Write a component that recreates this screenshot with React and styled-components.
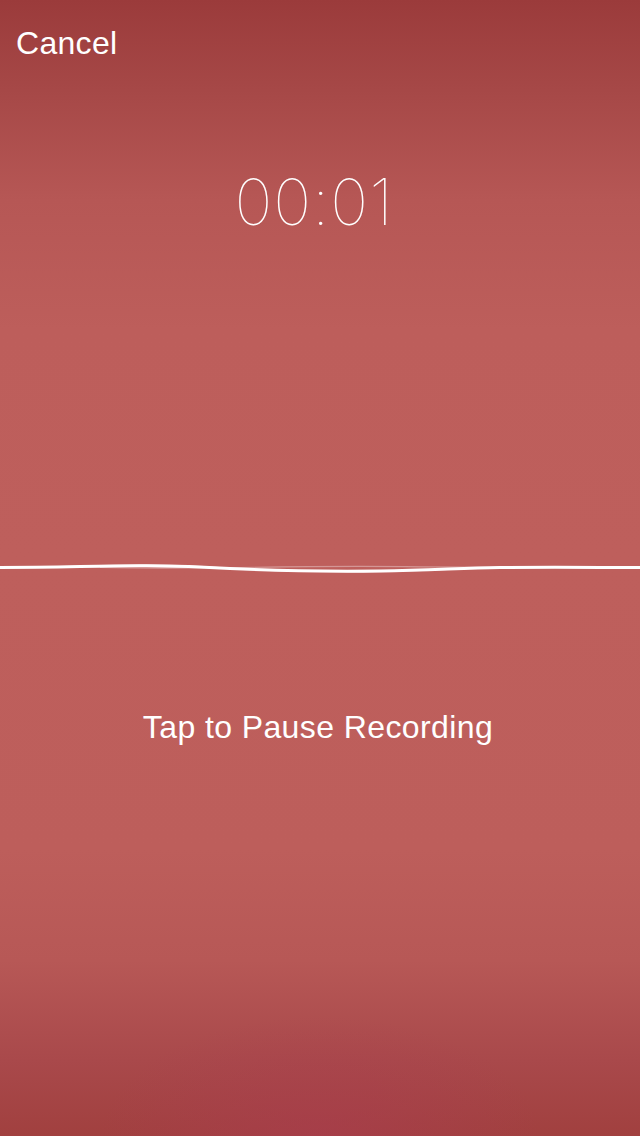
import React from "react";
import styled, { createGlobalStyle } from "styled-components";

const Global = createGlobalStyle`
  html, body { margin: 0; padding: 0; }
  body { width: 640px; height: 1136px; overflow: hidden; }
  #root { width: 640px; height: 1136px; }
`;

const Screen = styled.div`
  position: relative;
  width: 640px;
  height: 1136px;
  overflow: hidden;
  display: flex;
  flex-direction: column;
  font-family: "Liberation Sans", Arial, sans-serif;
  color: #fff;
  background:
    radial-gradient(ellipse 220px 120px at 320px 1136px, rgba(170, 60, 80, 0.55), rgba(170, 60, 80, 0) 100%),
    linear-gradient(
      to bottom,
      #9b3b3b 0px,
      #a64847 90px,
      #b65755 200px,
      #bd5e5b 330px,
      #be5f5c 560px,
      #bd5e5b 850px,
      #b75856 960px,
      #a9494b 1060px,
      #a1403f 1136px
    );
`;

const TopBar = styled.div`
  display: flex;
  padding: 27px 16px 0;
  height: 32px;
`;

const CancelButton = styled.button`
  background: none;
  border: none;
  padding: 0;
  margin: 0;
  color: #fff;
  font-family: "Liberation Sans", Arial, sans-serif;
  font-size: 32px;
  line-height: 32px;
  letter-spacing: 0.3px;
  cursor: pointer;
`;

const Timer = styled.div`
  margin-top: 111px;
  text-align: center;
  font-family: Inter, "Open Sans", sans-serif;
  font-weight: 100;
  font-size: 64px;
  line-height: 64px;
  letter-spacing: 1px;
  padding-right: 12px;
`;

const WaveWrap = styled.div`
  margin-top: 323px;
  height: 20px;
  display: flex;
`;

const Prompt = styled.div`
  margin-top: 132px;
  text-align: center;
  font-size: 32px;
  line-height: 36px;
  letter-spacing: 0.4px;
  padding-right: 4px;
`;

function Wave() {
  return (
    <svg width="640" height="20" viewBox="0 0 640 20">
      <path
        d="M0 10.5 C60 10.5 90 8.5 140 8 C180 7.5 200 9 230 11.5 C280 14.5 330 15 380 14.5 C430 14 460 11 500 10.5 C560 10 600 10.5 640 10.5"
        fill="none"
        stroke="rgba(255,255,255,0.45)"
        strokeWidth="1.5"
      />
      <path
        d="M100 10.5 C150 11.5 200 11 240 10.5 C300 9.5 360 9 420 9.8 C450 10.2 480 10.5 520 10.5"
        fill="none"
        stroke="rgba(255,255,255,0.35)"
        strokeWidth="1.2"
      />
      <path
        d="M0 10.5 C60 10.5 90 9 140 8.8 C180 8.6 200 9.5 230 11.5 C280 14 330 14.5 380 14 C430 13.5 460 11 500 10.5 C560 10 600 10.5 640 10.5"
        fill="none"
        stroke="#fff"
        strokeWidth="3"
      />
    </svg>
  );
}

export default function App() {
  return (
    <>
      <Global />
      <Screen>
        <TopBar>
          <CancelButton>Cancel</CancelButton>
        </TopBar>
        <Timer>00:01</Timer>
        <WaveWrap>
          <Wave />
        </WaveWrap>
        <Prompt>Tap to Pause Recording</Prompt>
      </Screen>
    </>
  );
}
